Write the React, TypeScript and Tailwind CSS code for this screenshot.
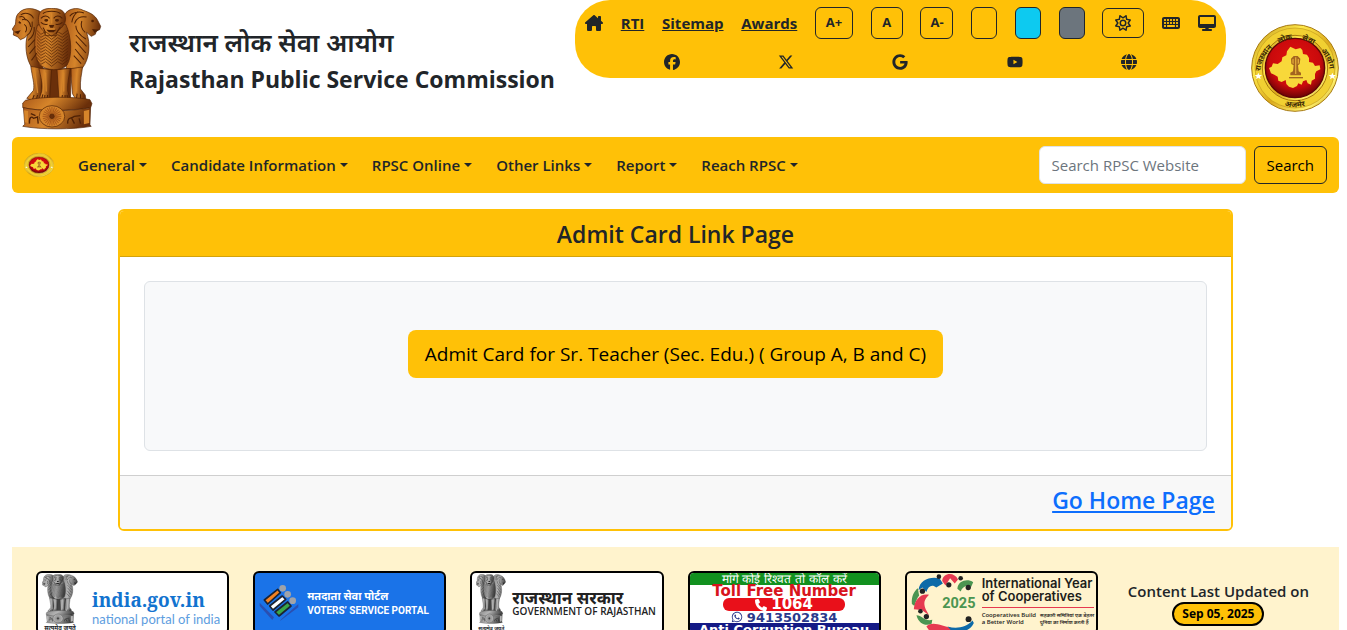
import {
  FaDesktop,
  FaFacebook,
  FaGlobe,
  FaGoogle,
  FaHouseChimney,
  FaKeyboard,
  FaPhone,
  FaRegSun,
  FaWhatsapp,
  FaXTwitter,
  FaYoutube,
} from "react-icons/fa6";

const TOP_LINKS = ["RTI", "Sitemap", "Awards"];

const MENUS = ["General", "Candidate Information", "RPSC Online", "Other Links", "Report", "Reach RPSC"];

const SOCIALS = [
  { label: "Facebook", Icon: FaFacebook },
  { label: "X", Icon: FaXTwitter },
  { label: "Google", Icon: FaGoogle },
  { label: "YouTube", Icon: FaYoutube },
  { label: "Website", Icon: FaGlobe },
];

type Tones = { id: string; light: string; mid: string; dark: string; line: string };

const BRONZE: Tones = { id: "bronze", light: "#d6852a", mid: "#a9581a", dark: "#6a2f0a", line: "#4f2105" };
const STONE: Tones = { id: "stone", light: "#b5b5b5", mid: "#8a8a8a", dark: "#444444", line: "#222222" };

const CHEVRONS = [98, 107, 116, 125, 134, 143, 152, 161, 170, 179, 188];
const RAYS = Array.from({ length: 24 }, (_, i) => i * 15);

// Lion capital of Ashoka
function LionCapital({ tones, className }: { tones: Tones; className: string }) {
  const fill = `url(#${tones.id})`;
  return (
    <svg viewBox="36 23 268 366" preserveAspectRatio="none" className={className} aria-hidden="true">
      <defs>
        <linearGradient id={tones.id} x1="0" x2="1" y1="0" y2="0.2">
          <stop offset="0" stopColor={tones.mid} />
          <stop offset="0.45" stopColor={tones.light} />
          <stop offset="1" stopColor={tones.dark} />
        </linearGradient>
      </defs>
      <g stroke={tones.line} strokeWidth="2" strokeLinejoin="round">
        {/* side lions */}
        <path
          fill={fill}
          d="M46 72L37 86L41 94L40 104L52 109L61 118L74 112L82 104C74 130 76 175 96 203L128 208L128 40C104 20 72 20 56 38C46 48 48 60 46 72Z"
        />
        <path
          fill={fill}
          d="M292 62L300 78L297 88L288 90L284 102L272 108L258 96C270 130 268 175 245 204L198 208L192 44C202 24 230 20 248 30C266 36 284 44 292 62Z"
        />
        {/* legs */}
        <path fill={fill} d="M92 198C96 230 104 250 100 270L80 294L100 302L122 298L130 205Z" />
        <path fill={fill} d="M210 205L216 280L228 300L256 298L254 284L240 266C238 240 244 220 246 200Z" />
        <path fill={tones.dark} d="M124 205L212 205L210 298L124 298Z" />
        <path fill={fill} d="M116 204C122 230 128 252 124 274L116 298L134 304L148 298L154 208Z" />
        <path fill={fill} d="M170 208L176 298L190 304L210 298L202 272C200 250 206 226 210 204Z" />
        {/* chest and head of the front lion */}
        <path fill={fill} d="M112 74C100 110 100 168 118 192C136 212 184 214 200 194C216 168 214 110 196 72Z" />
        <path
          fill={fill}
          d="M116 46C118 26 142 24 154 24C168 24 192 26 194 46C200 62 188 82 172 92L166 106L136 106L130 92C116 80 112 60 116 46Z"
        />
      </g>
      <g fill="none" stroke={tones.line} strokeWidth="2">
        {CHEVRONS.map((y) => (
          <path key={y} d={`M110 ${y - 8}L122 ${y + 4}L136 ${y - 4}L154 ${y + 10}L172 ${y - 4}L186 ${y + 4}L202 ${y - 8}`} />
        ))}
      </g>
      <g fill="none" stroke={tones.line} strokeWidth="3">
        <path d="M62 44C72 34 94 38 100 54M66 58C78 54 90 62 92 80M82 104C92 98 98 80 96 64M84 120C96 112 104 98 102 80M84 140L104 118M88 160L106 138M94 180L110 158M58 50C66 46 74 50 76 60M72 72C80 76 82 86 76 96" />
        <path d="M250 38C236 32 214 36 208 48M258 50C240 46 226 54 222 70M254 96C242 86 240 74 244 62M256 116C240 106 226 92 226 76M258 138L226 104M256 158L226 124M250 178L224 146M232 34C224 40 216 52 214 66M242 190L220 166" />
        <path d="M128 40C138 30 170 30 180 40M122 54C132 44 142 46 148 54M186 54C176 44 166 46 160 54M122 66C128 72 134 74 142 72M186 66C180 72 174 74 166 72M128 82C134 88 134 94 136 100M180 80C174 88 170 94 168 100" />
        <path d="M124 298L128 282M132 302L134 284M140 300L142 284M184 300L186 284M194 302L194 284M202 300L200 284M96 300L102 284M108 300L112 284M228 296L230 280M240 298L240 282" />
      </g>
      <g fill={tones.line}>
        <ellipse cx="138" cy="60" rx="6" ry="4" />
        <ellipse cx="170" cy="60" rx="6" ry="4" />
        <path d="M146 74L162 74L158 82L150 82ZM138 88L168 88L160 96L146 96Z" />
        <circle cx="60" cy="66" r="4" />
        <circle cx="276" cy="62" r="4" />
        <path d="M42 94L62 90L54 102ZM296 88L274 86L282 98Z" />
      </g>
      <g fill="none" stroke={tones.light} strokeWidth="4" strokeLinecap="round">
        <path d="M104 212L112 276M136 218L138 272M190 218L190 272M228 218L228 272" />
        <path d="M54 56L70 70M154 40L154 68M146 86L162 86" />
      </g>
      {/* abacus */}
      <g stroke={tones.line} strokeWidth="2">
        <path fill={fill} d="M76 300C120 288 220 288 268 298L274 310L270 322C210 332 120 334 68 322L68 308Z" />
        <path fill={fill} d="M70 322C120 334 212 334 270 322L268 374L272 378C220 388 120 388 68 378L74 372Z" />
        <ellipse cx="155" cy="348" rx="38" ry="32" fill={tones.light} />
      </g>
      <g stroke={tones.mid} strokeWidth="3">
        {RAYS.map((a) => (
          <path key={a} d="M155 340L155 320" transform={`rotate(${a} 155 348)`} />
        ))}
      </g>
      <circle cx="155" cy="348" r="7" fill={tones.dark} stroke={tones.line} strokeWidth="2" />
      <g fill="none" stroke={tones.line} strokeWidth="4">
        <path d="M88 370C86 352 94 346 100 354L112 350L114 370M92 340L106 346M202 370C200 350 212 356 222 348L240 346M214 354L222 370M236 354L240 370" />
      </g>
      <path d="M250 332L266 328L266 368L250 372Z" fill={tones.light} />
      <path d="M72 330L84 332L84 368L74 366Z" fill={tones.light} />
    </svg>
  );
}

const MOTTO = [
  { word: "राजस्थान", offset: "15%" },
  { word: "लोक", offset: "41%" },
  { word: "सेवा", offset: "62%" },
  { word: "आयोग", offset: "86%" },
];

// Round commission seal
function Seal({ id, className, plain = false }: { id: string; className: string; plain?: boolean }) {
  return (
    <svg viewBox="32 26 264 264" preserveAspectRatio="none" className={className} role="img" aria-label="RPSC">
      <defs>
        <linearGradient id={`${id}-gold`} x1="0" y1="0" x2="1" y2="1">
          <stop offset="0" stopColor="#b98a14" />
          <stop offset="0.3" stopColor="#ffe94a" />
          <stop offset="0.55" stopColor="#dba91c" />
          <stop offset="0.8" stopColor="#fff06a" />
          <stop offset="1" stopColor="#a8780c" />
        </linearGradient>
        <radialGradient id={`${id}-red`} cx="0.5" cy="0.4" r="0.6">
          <stop offset="0" stopColor="#e3120f" />
          <stop offset="0.7" stopColor="#c90a0c" />
          <stop offset="1" stopColor="#6b0306" />
        </radialGradient>
        <path id={`${id}-top`} d="M60 176A104 104 0 1 1 268 176" />
        <path id={`${id}-bottom`} d="M46 158A118 118 0 0 0 282 158" />
      </defs>
      <circle cx="164" cy="158" r="130" fill={`url(#${id}-gold)`} stroke="#a87b12" strokeWidth="3" />
      <circle cx="164" cy="158" r="120" fill="#f1d032" stroke="#c39a1c" strokeWidth="2" />
      <circle cx="164" cy="158" r="98" fill={`url(#${id}-gold)`} stroke="#a8780c" strokeWidth="3" />
      <circle cx="164" cy="158" r="89" fill={`url(#${id}-red)`} stroke="#5c0406" strokeWidth="4" />
      <path
        fill="#f8d83a"
        d="M150 94L158 98L166 102L180 98L186 104L188 116L200 118L206 128L206 140L218 142L224 152L238 150L240 162L228 168L224 176L224 190L214 196L212 208L202 204L198 194L188 198L184 208L174 204L170 212L158 218L146 214L138 206L136 194L124 200L114 196L112 184L102 178L92 174L86 158L94 154L98 144L112 146L124 138L126 126L138 120L140 108Z"
      />
      <g fill="#a3651f">
        <path d="M152 130L160 122L172 122L180 130L178 146L173 150L175 168L182 172L182 180L150 180L150 172L158 168L160 150L153 146Z" />
        <path d="M146 185L188 185L188 189L146 189Z" />
      </g>
      <path d="M164 126L168 126L168 176L164 176ZM156 132L160 130L160 146L156 144ZM172 130L176 132L176 144L172 146Z" fill="#e0a93a" />
      {!plain && (
        <g fill="#3d2a05" fontSize="23" fontWeight="700" fontFamily="'Noto Sans', sans-serif" textAnchor="middle">
          {MOTTO.map(({ word, offset }) => (
            <text key={word}>
              <textPath href={`#${id}-top`} startOffset={offset}>
                {word}
              </textPath>
            </text>
          ))}
          <text>
            <textPath href={`#${id}-bottom`} startOffset="50%">
              अजमेर
            </textPath>
          </text>
        </g>
      )}
      <path fill="#fff" d="M54 172l3 7h8l-6 5 2 8-7-5-7 5 2-8-6-5h8zM276 172l3 7h8l-6 5 2 8-7-5-7 5 2-8-6-5h8z" />
    </svg>
  );
}

function VoterMark() {
  return (
    <svg viewBox="60 76 120 114" className="h-[38px] w-10 shrink-0" aria-hidden="true">
      <path d="M62 132L105 176L100 184L62 142ZM178 136L128 180L122 188L178 146Z" fill="#2a4fb0" />
      <g stroke="#1c2333" strokeWidth="5" strokeLinejoin="round">
        <path d="M76 124L116 92L124 102L86 136Z" fill="#f58220" />
        <path d="M92 142L130 112L140 122L102 154Z" fill="#fff" />
        <path d="M108 160L146 130L156 142L120 172Z" fill="#3aa648" />
      </g>
      <g fill="#a0a3a8">
        <circle cx="131" cy="89" r="10" />
        <circle cx="146" cy="107" r="10" />
        <circle cx="161" cy="126" r="10" />
      </g>
    </svg>
  );
}

function CooperativesMark() {
  return (
    <svg viewBox="40 38 202 182" className="h-[60px] w-[67px] shrink-0" role="img" aria-label="2025">
      <path d="M62 90C66 58 96 48 126 54L136 70L116 82C104 72 92 76 86 96L74 82Z" fill="#0d6aa8" />
      <path d="M134 62C136 36 172 34 182 58L172 70L158 54L144 76Z" fill="#e63950" />
      <path d="M180 86C182 60 212 54 228 66L222 80C206 74 196 80 190 94Z" fill="#4b9551" />
      <path d="M42 132C40 106 50 92 60 84L64 106C58 114 54 124 50 138Z" fill="#4b9551" />
      <path d="M48 148C50 118 70 98 94 104C80 118 76 128 84 148L94 166L72 150Z" fill="#e63950" />
      <path d="M56 166C72 166 82 186 104 180L102 192C84 200 62 192 56 166Z" fill="#4b9551" />
      <path d="M86 200C108 182 130 200 170 206L156 220L100 220Z" fill="#e63950" />
      <path d="M150 200C176 208 206 204 226 182L230 190C220 212 198 220 166 218Z" fill="#0d6aa8" />
      <g fill="#222">
        <circle cx="74" cy="93" r="8" />
        <circle cx="124" cy="49" r="7" />
        <circle cx="154" cy="74" r="8" />
        <circle cx="190" cy="54" r="7" />
        <circle cx="213" cy="82" r="8" />
        <circle cx="68" cy="154" r="7" />
        <circle cx="86" cy="170" r="8" />
        <circle cx="214" cy="178" r="9" />
      </g>
      <text x="134" y="144" fontSize="44" fontWeight="700" fontFamily="Roboto, sans-serif" fill="#4b9551">
        2025
      </text>
    </svg>
  );
}

function TopBar() {
  return (
    <div className="flex h-[78px] w-[651px] shrink-0 flex-col rounded-[35px] bg-[#ffc107] px-[10px] pt-[7px]">
      <div className="flex h-8 items-center justify-between text-[15px] font-bold">
        <a href="#home" aria-label="Home">
          <FaHouseChimney className="size-[18px]" />
        </a>
        {TOP_LINKS.map((l) => (
          <a key={l} href="#" className="underline">
            {l}
          </a>
        ))}
        <button className="h-8 w-[38px] rounded-md border border-[#212529] text-[13px]">A+</button>
        <button className="h-8 w-8 rounded-md border border-[#212529] text-[13px]">A</button>
        <button className="h-8 w-[33px] rounded-md border border-[#212529] text-[13px]">A-</button>
        <button aria-label="Yellow theme" className="h-8 w-[26px] rounded-md border border-[#212529] bg-[#ffc107]" />
        <button aria-label="Cyan theme" className="h-8 w-[26px] rounded-md border border-[#212529] bg-[#0dcaf0]" />
        <button aria-label="Grey theme" className="h-8 w-[26px] rounded-md border border-[#212529] bg-[#6c757d]" />
        <button aria-label="Brightness" className="flex h-[30px] w-[42px] items-center justify-center rounded-md border border-[#212529]">
          <FaRegSun className="size-4" />
        </button>
        <a href="#keyboard" aria-label="Keyboard">
          <FaKeyboard className="size-[18px]" />
        </a>
        <a href="#screen" aria-label="Screen reader">
          <FaDesktop className="size-[18px]" />
        </a>
      </div>
      <div className="mt-[15px] grid grid-cols-5 justify-items-center px-[30px]">
        {SOCIALS.map(({ label, Icon }) => (
          <a key={label} href="#" aria-label={label}>
            <Icon className="size-4" />
          </a>
        ))}
      </div>
    </div>
  );
}

function Navbar() {
  return (
    <nav className="flex h-14 items-center rounded-md bg-[#ffc107] px-3">
      <Seal id="brand" plain className="h-6 w-[30px]" />
      <ul className="ml-6 flex items-center gap-6">
        {MENUS.map((m) => (
          <li key={m}>
            <button className="flex items-center gap-1 text-[15px] font-semibold">
              {m}
              <span className="border-x-4 border-t-4 border-x-transparent border-t-[#212529]" aria-hidden="true" />
            </button>
          </li>
        ))}
      </ul>
      <form className="ml-auto flex gap-2">
        <input
          type="search"
          aria-label="Search RPSC Website"
          placeholder="Search RPSC Website"
          className="h-[38px] w-[207px] rounded-md border border-[#dee2e6] bg-white px-3 text-[15px] placeholder:text-[#6c757d]"
        />
        <button type="button" className="h-[38px] rounded-md border border-[#212529] px-3 text-[15px] text-black">
          Search
        </button>
      </form>
    </nav>
  );
}

function Footer() {
  const card = "flex h-16 items-center overflow-hidden rounded-md border-2 border-black";
  return (
    <footer className="mt-4 grid grid-cols-6 items-center gap-6 bg-[#fff3cd] p-6">
      <a href="#" className={`${card} bg-white pl-1`}>
        <span className="flex shrink-0 flex-col items-center">
          <LionCapital tones={STONE} className="h-[50px] w-9" />
          <span className="text-[6px] leading-[8px] font-bold">सत्यमेव जयते</span>
        </span>
        <span className="ml-[14px] pt-3 whitespace-nowrap">
          <span className="block font-['Noto_Serif','DejaVu_Serif',serif] text-[19px] leading-[19px] font-bold text-[#1273cf]">
            india.gov.in
          </span>
          <span className="block font-[Lato,sans-serif] text-[13px] leading-[18px] text-[#5d9de0]">national portal of india</span>
        </span>
      </a>
      <a href="#" className={`${card} bg-[#1a73e8] pl-1`}>
        <VoterMark />
        <span className="ml-2 font-bold whitespace-nowrap text-white">
          <span className="block text-[11px] leading-[15px]">मतदाता सेवा पोर्टल</span>
          <span className="block font-[Roboto,sans-serif] text-[10px] leading-[15px]">VOTERS’ SERVICE PORTAL</span>
        </span>
      </a>
      <a href="#" className={`${card} bg-white pl-1`}>
        <span className="flex shrink-0 flex-col items-center">
          <LionCapital tones={STONE} className="h-[50px] w-[30px]" />
          <span className="text-[5px] leading-[8px] font-bold">सत्यमेव जयते</span>
        </span>
        <span className="ml-[6px] whitespace-nowrap text-[#222]">
          <span className="block text-[17px] leading-[15px] font-bold">राजस्थान सरकार</span>
          <span className="block text-[10px] leading-[12px] font-semibold">GOVERNMENT OF RAJASTHAN</span>
        </span>
      </a>
      <a
        href="#"
        className={`${card} flex-col bg-white text-center font-['DejaVu_Sans',sans-serif] font-bold whitespace-nowrap`}
      >
        <span className="w-full shrink-0 bg-[#12911f] text-xs leading-[12px] font-medium text-white">
          मांगे कोई रिश्वत तो कॉल करें
        </span>
        <span className="text-[15px] leading-[13px] text-[#d8141c]">Toll Free Number</span>
        <span className="flex h-[13px] shrink-0 items-center gap-1 rounded-md bg-[#e9101a] px-8 text-[15px] leading-[13px] text-white">
          <FaPhone className="size-3" />
          1064
        </span>
        <span className="flex items-center gap-1 text-[13px] leading-[11px] text-[#2b3a8c]">
          <FaWhatsapp className="size-3" />
          9413502834
        </span>
        <span className="w-full shrink-0 bg-[#141a86] text-[13px] leading-[13px] text-white">Anti Corruption Bureau</span>
      </a>
      <a href="#" className={`${card} bg-[#fff3cd] pl-1`}>
        <CooperativesMark />
        <span className="ml-1 self-start pt-1 whitespace-nowrap text-[#1d1d1b]">
          <span className="block font-[Inter,sans-serif] text-[13px] leading-[13px] font-semibold">
            International Year
            <br />
            of Cooperatives
          </span>
          <span className="mt-1 block h-px bg-[#e63950]" />
          <span className="flex gap-1 pt-1 text-[6px] leading-[7px] font-semibold">
            <span>
              Cooperatives Build
              <br />a Better World
            </span>
            <span className="text-[5px]">
              सहकारी समितियां एक बेहतर
              <br />
              दुनिया का निर्माण करती हैं
            </span>
          </span>
        </span>
      </a>
      <div className="text-center text-[15px] leading-[21px] font-semibold whitespace-nowrap">
        Content Last Updated on
        <span className="mx-auto block w-fit rounded-full border-2 border-black bg-[#ffc107] px-2 text-xs leading-[20px] font-bold text-black">
          Sep 05, 2025
        </span>
      </div>
    </footer>
  );
}

export default function App() {
  return (
    <div className="bg-white pr-2 pl-3 font-['Open_Sans','Noto_Sans',sans-serif] text-[#212529]">
      <header className="flex h-[137px] items-start">
        <LionCapital tones={BRONZE} className="mt-2 h-[122px] w-[90px] shrink-0" />
        <div className="mt-6 ml-[27px] whitespace-nowrap">
          <div className="text-[26px] leading-[37px] font-semibold">राजस्थान लोक सेवा आयोग</div>
          <h1 className="text-[23px] leading-[37px] font-bold">Rajasthan Public Service Commission</h1>
        </div>
        <div className="ml-auto flex">
          <TopBar />
          <Seal id="seal" className="mt-6 ml-[25px] size-[88px] shrink-0" />
        </div>
      </header>

      <Navbar />

      <main className="mx-auto mt-4 w-[84%] overflow-hidden rounded-md border-2 border-[#ffc107]">
        <h2 className="border-b border-[#d3a20c] bg-[#ffc107] pt-[9px] pb-[7px] text-center text-[23px] leading-[29px] font-semibold">
          Admit Card Link Page
        </h2>
        <div className="p-6">
          <div className="rounded-md border border-[#dee2e6] bg-[#f8f9fa] px-6 pt-12 pb-[72px] text-center">
            <button className="h-12 rounded-lg bg-[#ffc107] px-[17px] text-[19px] text-black">
              Admit Card for Sr. Teacher (Sec. Edu.) ( Group A, B and C)
            </button>
          </div>
        </div>
        <div className="border-t border-[#cfcfcf] bg-[#f8f8f8] px-4 pt-2 pb-3">
          <a
            href="#home"
            className="ml-auto block w-fit text-[23px] leading-[33px] font-semibold text-[#0d6efd] underline"
          >
            Go Home Page
          </a>
        </div>
      </main>

      <Footer />
    </div>
  );
}
